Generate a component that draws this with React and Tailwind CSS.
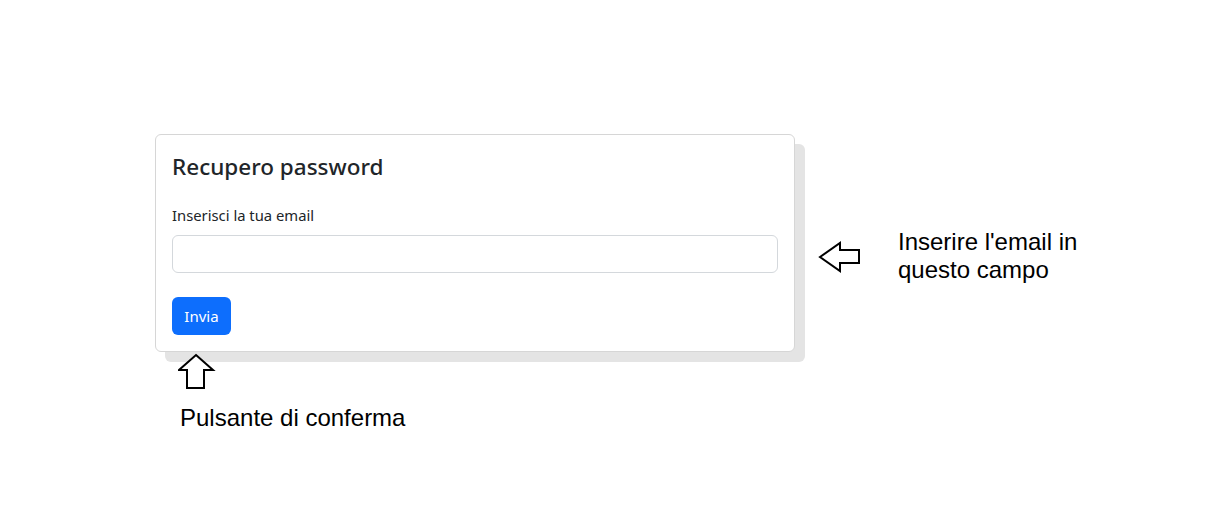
import React from 'react';

const LeftArrow = () => (
  <svg width="44" height="34" viewBox="0 0 44 34" className="block">
    <polygon
      points="2,16 22,2 22,9 41,9 41,22 22,22 22,30"
      fill="white"
      stroke="black"
      strokeWidth="2"
      strokeLinejoin="miter"
    />
  </svg>
);

const UpArrow = () => (
  <svg width="38" height="38" viewBox="0 0 38 38" className="block">
    <polygon
      points="18,2 35,17 26,17 26,35 9,35 9,17 1,17"
      fill="white"
      stroke="black"
      strokeWidth="2"
      strokeLinejoin="miter"
    />
  </svg>
);

export default function App() {
  return (
    <div className="min-h-screen bg-white pt-[134px] pl-[155px]">
      <div className="flex items-start">
        <div
          className="w-[640px] rounded-[6px] border border-[#d6d6d6] bg-white p-4 text-[#212529] shadow-[10px_10px_0_#e4e4e4]"
          style={{ fontFamily: '"Noto Sans", sans-serif' }}
        >
          <h4 className="text-[22.5px] font-medium leading-[30px] mt-[1px] mb-[21px]">Recupero password</h4>
          <label className="block text-[14.8px] leading-6 mb-2">Inserisci la tua email</label>
          <input
            type="email"
            className="block h-[38px] w-full rounded-[6px] border border-[#d4d8dc] bg-white px-3 outline-none"
          />
          <button className="mt-6 h-[38px] w-[59px] rounded-[6px] bg-[#0d6efd] text-[15px] text-white">
            Invia
          </button>
        </div>
        <div className="ml-[23px] mt-[107px]">
          <LeftArrow />
        </div>
        <div
          className="ml-[36px] mt-[94px] text-[24px] leading-[28px] text-black"
          style={{ fontFamily: '"Liberation Sans", Arial, sans-serif' }}
        >
          Inserire l'email in
          <br />
          questo campo
        </div>
      </div>
      <div className="pl-[23px] pt-[1px]">
        <UpArrow />
      </div>
      <div
        className="pl-[25px] mt-[13px] text-[24px] leading-[27px] text-black"
        style={{ fontFamily: '"Liberation Sans", Arial, sans-serif' }}
      >
        Pulsante di conferma
      </div>
    </div>
  );
}
